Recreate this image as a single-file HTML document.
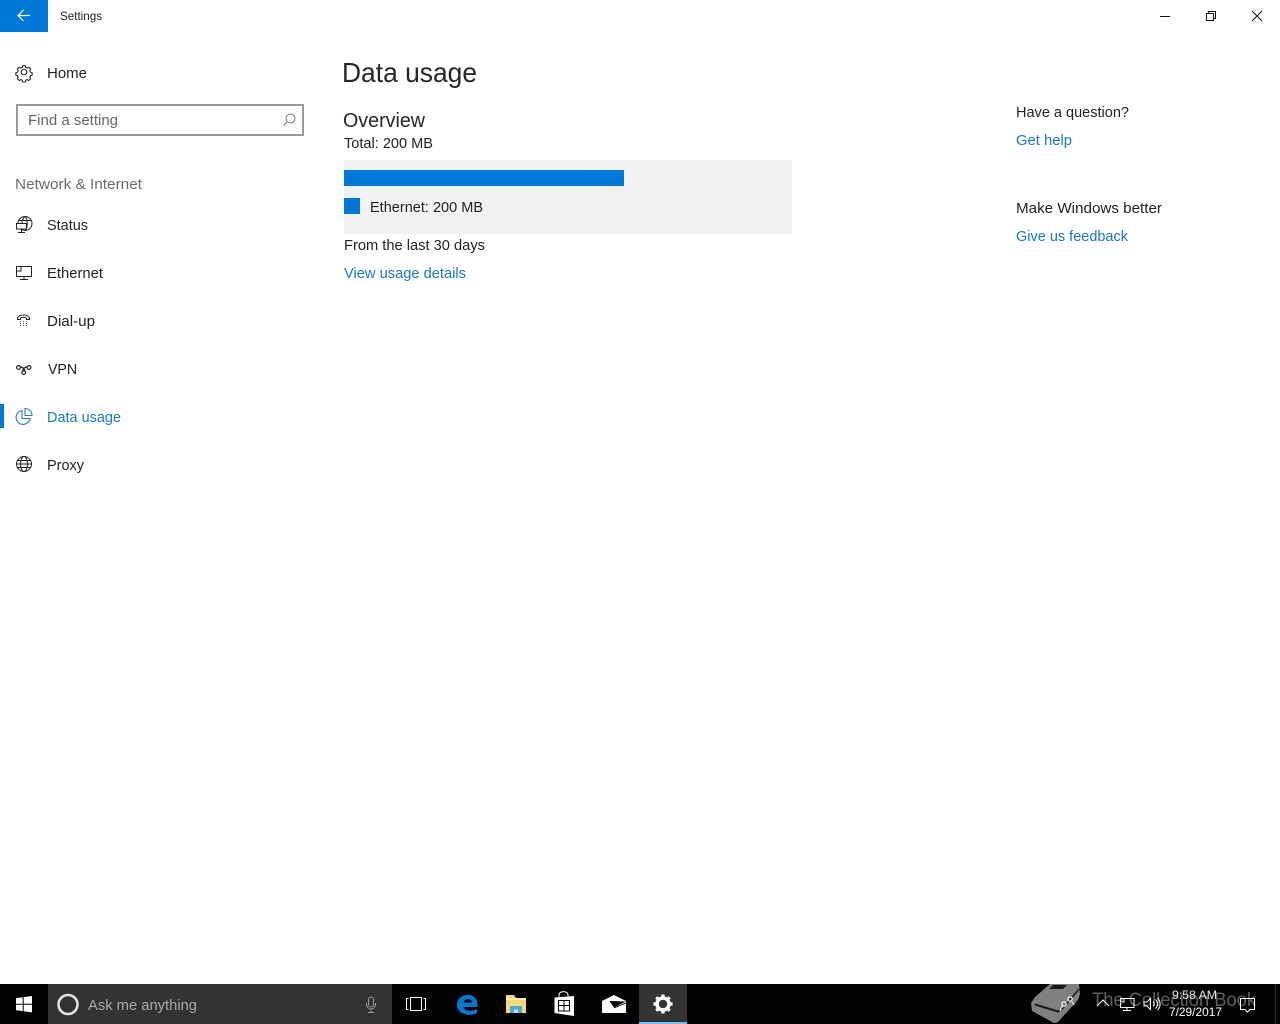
<!DOCTYPE html>
<html><head><meta charset="utf-8"><title>Settings</title>
<style>
html,body{margin:0;padding:0;background:#fff;width:1280px;height:1024px;overflow:hidden}
svg{display:block}
text{font-family:"Liberation Sans",sans-serif;font-size:15px;fill:#222}
.l{fill:#1a78c0}
.i{fill:none;stroke:#222;stroke-width:1}
.w{fill:none;stroke:#fff;stroke-width:1}
</style></head><body>
<svg width="1280" height="1024" viewBox="0 0 1280 1024" xmlns="http://www.w3.org/2000/svg">
<rect width="1280" height="1024" fill="#fff"/>
<!-- title bar -->
<rect width="48" height="32" fill="#0078d7"/>
<path d="M18 15.500H30M23.500 10L18 15.500L23.500 21" fill="none" stroke="#fff" stroke-width="1.200"/>
<text x="60" y="20" style="font-size:12px" textLength="42" lengthAdjust="spacingAndGlyphs">Settings</text>
<path d="M1160 16.500H1170" stroke="#111" stroke-width="1"/>
<path d="M1206.500 13.500h7v7h-7zM1208.500 13.500v-2h7v7h-2" fill="none" stroke="#111" stroke-width="1"/>
<path d="M1252 11L1262 21M1262 11L1252 21" stroke="#111" stroke-width="1"/>
<!-- home -->
<g class="i" transform="translate(24 72) scale(.8)" style="stroke-width:1.250">
<circle r="3.500"/>
<path d="M-1.500-7.500h3l.6 2 1.800.8 1.900-1 2.100 2.100-1 1.900.8 1.800 2 .6v3l-2 .6-.8 1.800 1 1.900-2.100 2.100-1.900-1-1.800.8-.6 2h-3l-.6-2-1.800-.8-1.900 1-2.100-2.100 1-1.900-.8-1.800-2-.6v-3l2-.6.8-1.800-1-1.900 2.100-2.100 1.900 1 1.800-.8z" transform="scale(1.050)"/>
</g>
<text x="47" y="78" textLength="40" lengthAdjust="spacingAndGlyphs">Home</text>
<!-- search -->
<rect x="17" y="105" width="286" height="30" fill="#fff" stroke="#999" stroke-width="2"/>
<text x="28" y="125" style="fill:#666" textLength="90" lengthAdjust="spacingAndGlyphs">Find a setting</text>
<g class="i" style="stroke:#777"><circle cx="290.500" cy="118.500" r="4.500"/><path d="M287 122L283.500 125.500"/></g>
<text x="15" y="189" style="fill:#6b6b6b" textLength="127" lengthAdjust="spacingAndGlyphs">Network &amp; Internet</text>
<!-- nav -->
<g class="i">
<circle cx="25" cy="223.500" r="7"/><path d="M25 216.500C22 219 22 222 22 223.500M25 216.500C28 219 28 228 25 230.500M18.500 220.500H31.500"/>
<rect x="16.500" y="223.500" width="10" height="5.500" fill="#fff"/><path d="M21.500 229V232M18 232.500H25"/>
</g>
<text x="47" y="230" textLength="41" lengthAdjust="spacingAndGlyphs">Status</text>
<g class="i">
<path d="M20.500 266.500H31.500V276.500H16.500V271"/><rect x="16.500" y="266.500" width="4.500" height="4.500"/><path d="M24 276.500V279M20 279.500H28"/>
</g>
<text x="47" y="278" textLength="56" lengthAdjust="spacingAndGlyphs">Ethernet</text>
<path d="M17.500 319.500V318C19 314 28 314 29.500 318V319.500H26.500V318C25 317 22 317 20.500 318V319.500Z" class="i"/>
<g fill="#555"><rect x="20" y="321" width="1" height="1"/><rect x="23" y="321" width="1" height="1"/><rect x="26" y="321" width="1" height="1"/><rect x="20" y="323" width="1" height="1"/><rect x="23" y="323" width="1" height="1"/><rect x="26" y="323" width="1" height="1"/><rect x="20" y="325" width="1" height="1"/><rect x="23" y="325" width="1" height="1"/><rect x="26" y="325" width="1" height="1"/></g>
<text x="47" y="326" textLength="48" lengthAdjust="spacingAndGlyphs">Dial-up</text>
<g class="i" style="stroke-width:1.200">
<circle cx="18.500" cy="367.500" r="1.900"/><circle cx="29" cy="367.500" r="1.900"/><circle cx="23.700" cy="372.500" r="1.900"/>
<path d="M20.500 367C23 367 25 370 24.500 371M27 367C24.500 367 22.500 370 23 371"/>
</g>
<text x="48" y="374" textLength="29" lengthAdjust="spacingAndGlyphs">VPN</text>
<rect x="0" y="404" width="4" height="24" fill="#0078d7"/>
<g class="i" style="stroke:#2a7cc0;stroke-width:1.100">
<path d="M22 410.500A7 7 0 1 0 30 418.500H22Z"/>
<path d="M25 408.500V415.500H32A7 7 0 0 0 25 408.500Z"/>
</g>
<text x="47" y="422" class="l" textLength="74" lengthAdjust="spacingAndGlyphs">Data usage</text>
<g class="i">
<circle cx="24" cy="464" r="7.500"/><ellipse cx="24" cy="464" rx="3.500" ry="7.500"/><path d="M16.500 464H31.500M17.500 460.500H30.500M17.500 467.500H30.500"/>
</g>
<text x="47" y="470" textLength="37" lengthAdjust="spacingAndGlyphs">Proxy</text>
<!-- content -->
<text x="342" y="82" style="font-size:28px;fill:#262626" textLength="135" lengthAdjust="spacingAndGlyphs">Data usage</text>
<text x="343" y="127" style="font-size:20px;fill:#262626" textLength="82" lengthAdjust="spacingAndGlyphs">Overview</text>
<text x="344" y="148" textLength="89" lengthAdjust="spacingAndGlyphs">Total: 200 MB</text>
<rect x="344" y="160" width="448" height="74" fill="#f2f2f2"/>
<rect x="344" y="170" width="280" height="16" fill="#0078d7"/>
<rect x="344" y="198" width="16" height="16" fill="#0078d7"/>
<text x="370" y="212" textLength="113" lengthAdjust="spacingAndGlyphs">Ethernet: 200 MB</text>
<text x="344" y="250" textLength="141" lengthAdjust="spacingAndGlyphs">From the last 30 days</text>
<text x="344" y="278" class="l" textLength="122" lengthAdjust="spacingAndGlyphs">View usage details</text>
<text x="1016" y="117" textLength="113" lengthAdjust="spacingAndGlyphs">Have a question?</text>
<text x="1016" y="145" class="l" textLength="56" lengthAdjust="spacingAndGlyphs">Get help</text>
<text x="1016" y="213" textLength="146" lengthAdjust="spacingAndGlyphs">Make Windows better</text>
<text x="1016" y="241" class="l" textLength="112" lengthAdjust="spacingAndGlyphs">Give us feedback</text>
<!-- taskbar -->
<rect x="0" y="984" width="1280" height="40" fill="#030305"/>
<rect x="48" y="984" width="344" height="40" fill="#333"/>
<path d="M16 998.300L22.700 997.300V1003.700H16ZM23.700 997.100L32 996V1003.700H23.700ZM16 1004.700H22.700V1011.100L16 1010.100ZM23.700 1004.700H32V1012.400L23.700 1011.300Z" fill="#fff"/>
<circle cx="68" cy="1004.500" r="9.500" fill="none" stroke="#e6e6e6" stroke-width="2.500"/>
<text x="88" y="1010" style="fill:#a8a8a8" textLength="109" lengthAdjust="spacingAndGlyphs">Ask me anything</text>
<g fill="none" stroke="#999" stroke-width="1"><rect x="368.500" y="997" width="5" height="10" rx="2.500"/><path d="M366.500 1003v1.500a4.500 4.500 0 0 0 9 0V1003M371 1009v3M368 1012.500h6"/></g>
<g class="w"><rect x="410.500" y="997.500" width="11" height="13"/><path d="M408.500 998.500H406.500V1009.500H408.500M423.500 998.500H425.500V1009.500H423.500"/></g>
<!-- edge -->
<path d="M457 1005C457 997 464 994 470 995C475 996 478 1000 477.500 1007H463.500C464 1011 471 1012 477 1009V1013C469 1017 457 1014 457 1005ZM463.500 1002.500H472C472 998 465 998 463.500 1002.500Z" fill="#0a78d0"/>
<!-- explorer -->
<path d="M506 995H514L516 998H526V1013H506Z" fill="#f5d77e"/>
<rect x="506" y="998" width="20" height="2" fill="#fff0b0"/>
<path d="M510 1013V1006H522V1013H518V1009.500H514V1013Z" fill="#4aa8dc"/>
<rect x="514" y="1009.500" width="4" height="3.500" fill="#bfe0ee"/>
<!-- store -->
<path d="M554.500 997.500L574 996V1016L554.500 1013Z" fill="#fff"/>
<path d="M559 997V995C559 990.500 568 990.500 568 995V997" fill="none" stroke="#fff" stroke-width="1"/>
<path d="M558.500 1000.500H569.500V1011H558.500ZM564 1000.500V1011M558.500 1005.500H569.500" fill="none" stroke="#030305" stroke-width="1"/>
<!-- mail -->
<path d="M602 1001L614 995L626 1001V1013H602Z" fill="#fff"/>
<path d="M609.500 1001L626 1001.500L614 1007.500Z" fill="#030305"/>
<path d="M614 1008L626 1003" stroke="#030305" stroke-width=".8"/>
<!-- settings active -->
<rect x="639" y="984" width="48" height="40" fill="#333"/>
<rect x="639" y="1022" width="48" height="2" fill="#76b9ed"/>
<g transform="translate(663 1004)">
<circle r="6" fill="none" stroke="#fff" stroke-width="3.500"/>
<g stroke="#fff" stroke-width="3.200"><path d="M0-9.500V-6M0 9.500V6M-9.500 0H-6M9.500 0H6M-6.700-6.700L-4.300-4.300M6.700 6.700L4.300 4.300M-6.700 6.700L-4.300 4.300M6.700-6.700L4.300-4.300"/></g>
</g>
<!-- watermark book -->
<path d="M1050 984H1079L1080 994L1078 1000L1058 1022L1054 1023L1032 1011L1031 1003L1035 997Z" fill="#808080"/>
<path d="M1053 985H1067L1063 989H1049Z" fill="#1a1a1a"/>
<path d="M1035 1004.500L1058 1011.500L1064 1007" fill="none" stroke="#1a1a1a" stroke-width="2"/>
<path d="M1064 1007L1079 989" fill="none" stroke="#1a1a1a" stroke-width="1.500"/>
<g fill="none" stroke="#fff" stroke-width="1.100"><circle cx="1064" cy="1004" r="2.200"/><circle cx="1070" cy="999" r="2.200"/><path d="M1060 1011C1060.500 1008 1062 1007 1063 1006.500M1072 1002L1074 1005"/></g>
<text x="1092" y="1006" style="font-size:19px;fill:#5e5e5e" textLength="164" lengthAdjust="spacingAndGlyphs">The Collection Book</text>
<!-- tray -->
<path d="M1097 1006L1103 1000L1109 1006" class="w"/>
<g class="w"><path d="M1123 998.500H1134V1007.500H1120.500V1003"/><rect x="1120.500" y="998.500" width="3.500" height="3.500"/><path d="M1127 1007.500V1010.500M1123 1010.500H1131"/></g>
<g class="w"><path d="M1144 1002H1147L1150.500 998.500V1009.500L1147 1006H1144ZM1153 1001.500C1154.500 1003 1154.500 1005 1153 1006.500M1155.500 999.500C1158 1002 1158 1006 1155.500 1008.500M1157.500 998C1161 1001.500 1161 1006.500 1157.500 1010"/></g>
<text x="1172" y="999" style="font-size:12px;fill:#e6e6e6" textLength="45" lengthAdjust="spacingAndGlyphs">9:58 AM</text>
<text x="1169" y="1016" style="font-size:12px;fill:#fff" textLength="53" lengthAdjust="spacingAndGlyphs">7/29/2017</text>
<path d="M1240.500 998.500H1254.500V1009.500H1250L1247.500 1012L1245 1009.500H1240.500Z" class="w"/>
<rect x="1275" y="984" width="1" height="40" fill="#2a2a2a"/>
</svg>
</body></html>
